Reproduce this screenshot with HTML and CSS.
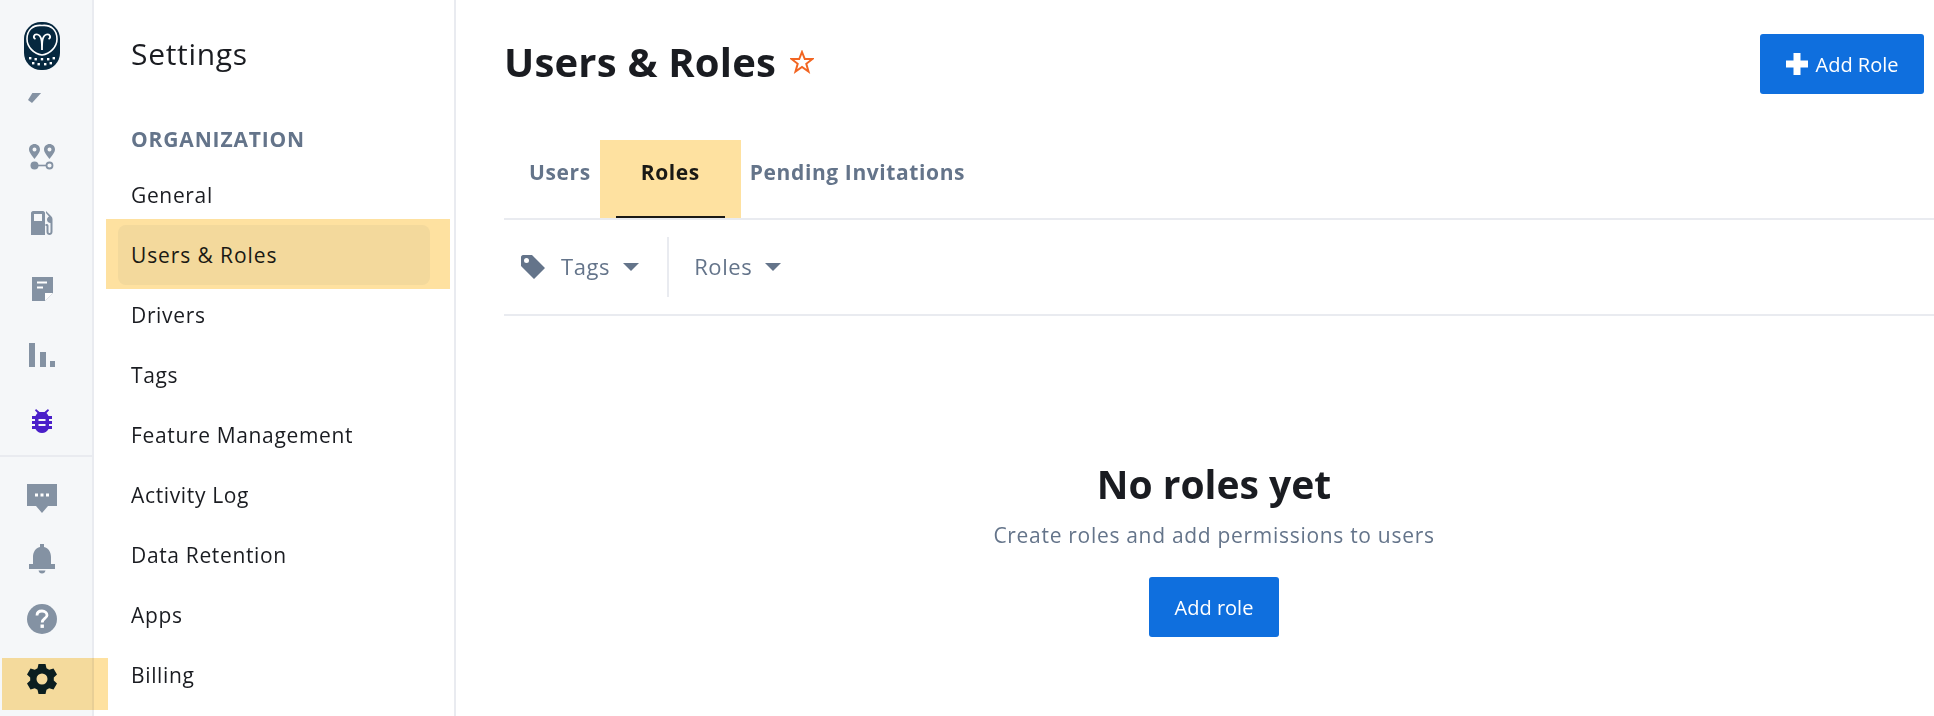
FILE: index.html
```html
<!DOCTYPE html>
<html lang="en">
<head>
    <meta charset="UTF-8">
    <meta name="viewport" content="width=device-width, initial-scale=1.0">
    <title>Users &amp; Roles</title>
    <link rel="stylesheet" href="styles.css">
</head>
<body>
    <!-- Icon rail -->
    <div class="rail">
        <div class="rail-logo">
            <svg width="36" height="48" viewBox="0 0 36 48">
                <rect width="36" height="48" rx="17" fill="#06283f"/>
                <path d="M18 3.500C27 2.500 33 8 33 17C33 25 26 32 18 33C10 32 3 25 3 17C3 8 9 2.500 18 3.500Z" fill="none" stroke="#fff" stroke-width="1.600"/>
                <path d="M18 28C18 20 18 14 13.500 12.500C10 11.500 8.500 15.500 11.500 17M18 28C18 20 18 14 22.500 12.500C26 11.500 27.500 15.500 24.500 17" fill="none" stroke="#fff" stroke-width="1.800"/>
                <g fill="#fff">
                    <rect x="5" y="35" width="2.400" height="2.400"/><rect x="10.500" y="36" width="2.400" height="2.400"/><rect x="16.800" y="36" width="2.400" height="2.400"/><rect x="23" y="36" width="2.400" height="2.400"/><rect x="28.600" y="35" width="2.400" height="2.400"/>
                    <rect x="8" y="40" width="2.400" height="2.400"/><rect x="13.500" y="41" width="2.400" height="2.400"/><rect x="20" y="41" width="2.400" height="2.400"/><rect x="25.600" y="40" width="2.400" height="2.400"/>
                </g>
            </svg>
        </div>
        <div class="rail-list">
            <div class="rail-item rail-cut">
                <svg width="26" height="26" viewBox="0 0 26 26"><path d="M4 14H13L3 25L-1 22Z" fill="#8492a3"/></svg>
            </div>
            <div class="rail-item">
                <svg width="26" height="26" viewBox="0 0 26 26" fill="#8492a3">
                    <path fill-rule="evenodd" d="M5.500 0C8.500 0 11 2.400 11 5.300C11 8.500 8 11.500 5.500 15C3 11.500 0 8.500 0 5.300C0 2.400 2.500 0 5.500 0ZM5.500 3.500A2 2 0 1 0 5.500 7.500A2 2 0 1 0 5.500 3.500Z"/>
                    <path fill-rule="evenodd" d="M20.500 0C23.500 0 26 2.400 26 5.300C26 8.500 23 11.500 20.500 15C18 11.500 15 8.500 15 5.300C15 2.400 17.500 0 20.500 0ZM20.500 3.500A2 2 0 1 0 20.500 7.500A2 2 0 1 0 20.500 3.500Z"/>
                    <circle cx="5.500" cy="21.500" r="4"/>
                    <rect x="8" y="20.700" width="10" height="1.600"/>
                    <circle cx="20.500" cy="21.500" r="3" fill="none" stroke="#8492a3" stroke-width="1.800"/>
                </svg>
            </div>
            <div class="rail-item">
                <svg width="22" height="24" viewBox="0 0 22 24" fill="#8492a3">
                    <path fill-rule="evenodd" d="M2 0H12C13 0 14 1 14 2V24H0V2C0 1 1 0 2 0ZM3 3V10H11V3Z"/>
                    <path d="M15 0L20 5C21 6 21.500 7 21.500 8V21C21.500 23 20 24 18.500 24C17 24 15.500 23 15.500 21V15H14.500V13H16C17 13 17.500 14 17.500 15V21C17.500 22.300 19.500 22.300 19.500 21V12C17.500 12 16 10.500 16 8.500C16 7 17 6 18 5.500L15 2Z"/>
                </svg>
            </div>
            <div class="rail-item">
                <svg width="21" height="24" viewBox="0 0 21 24">
                    <path d="M0 0H21V16L13 24H0Z" fill="#8492a3"/>
                    <path d="M5 4.500H15V6.500H5ZM5 9.500H11V11.500H5Z" fill="#fff"/>
                    <path d="M13 24V16H21Z" fill="#fff"/>
                </svg>
            </div>
            <div class="rail-item">
                <svg width="26" height="24" viewBox="0 0 26 24" fill="#8492a3">
                    <rect x="0" y="0" width="6" height="24"/>
                    <rect x="11" y="9" width="6" height="15"/>
                    <rect x="21" y="18" width="5" height="6"/>
                </svg>
            </div>
            <div class="rail-item">
                <svg width="20" height="24" viewBox="0 0 20 24" fill="#4a1fc9">
                    <path d="M4 0L7.500 3H12.500L16 0L17 1.500L14.500 4C15.500 5 16 6 16.500 7H20V10H17V12H20V15H17V17H20V20H16.500C15 22.500 13 24 10 24C7 24 5 22.500 3.500 20H0V17H3V15H0V12H3V10H0V7H3.500C4 6 4.500 5 5.500 4L3 1.500Z"/>
                    <path d="M6.500 10H13.500V12H6.500ZM6.500 15H13.500V17H6.500Z" fill="#f5f7f9"/>
                </svg>
            </div>
        </div>
        <div class="rail-bottom">
            <div class="rail-foot">
                <svg width="30" height="30" viewBox="0 0 30 30">
                    <path d="M0 0H30V22H21L15 29L9 22H0Z" fill="#8492a3"/>
                    <path d="M8 9.500H11V12.500H8ZM13.500 9.500H16.500V12.500H13.500ZM19 9.500H22V12.500H19Z" fill="#fff"/>
                </svg>
            </div>
            <div class="rail-foot">
                <svg width="26" height="30" viewBox="0 0 26 30" fill="#8492a3">
                    <path d="M11 0H15V3C19.500 4 22 8 22 13V20L26 20V25H0V20L4 20V13C4 8 6.500 4 11 3Z"/>
                    <path d="M9.500 26.500H16.500C16 28.500 15 29.500 13 29.500C11 29.500 10 28.500 9.500 26.500Z"/>
                </svg>
            </div>
            <div class="rail-foot">
                <svg width="30" height="30" viewBox="0 0 30 30">
                    <circle cx="15" cy="15" r="15" fill="#8492a3"/>
                    <path d="M10 11.500C10 8.500 12.200 7 15 7C18 7 20 8.800 20 11.200C20 14.500 15.200 14.500 15.200 18.500" fill="none" stroke="#fff" stroke-width="2.800"/>
                    <rect x="13.500" y="20.500" width="3.400" height="3.400" fill="#fff"/>
                </svg>
            </div>
            <div class="rail-foot">
                <svg width="30" height="30" viewBox="0 0 30 30">
                    <path fill="#0b2233" fill-rule="evenodd" d="M11.500 0H18.500L19.500 4.300L22.200 5.800L26.500 4.500L30 10.500L26.800 13.500V16.500L30 19.500L26.500 25.500L22.200 24.200L19.500 25.700L18.500 30H11.500L10.500 25.700L7.800 24.200L3.500 25.500L0 19.500L3.200 16.500V13.500L0 10.500L3.500 4.500L7.800 5.800L10.500 4.300ZM15 9.500A5.500 5.500 0 1 0 15 20.500A5.500 5.500 0 1 0 15 9.500Z"/>
                </svg>
            </div>
            <span class="mark mark-gear"></span>
        </div>
    </div>

    <!-- Settings menu -->
    <div class="menu">
        <div class="menu-title">Settings</div>
        <div class="menu-heading">ORGANIZATION</div>
        <a class="menu-item">General</a>
        <a class="menu-item active">Users &amp; Roles<span class="mark mark-menu"></span></a>
        <a class="menu-item">Drivers</a>
        <a class="menu-item">Tags</a>
        <a class="menu-item">Feature Management</a>
        <a class="menu-item">Activity Log</a>
        <a class="menu-item">Data Retention</a>
        <a class="menu-item">Apps</a>
        <a class="menu-item">Billing</a>
    </div>

    <!-- Main content -->
    <div class="main">
        <div class="page-head">
            <div class="page-title">
                <h1>Users &amp; Roles</h1>
                <svg width="24" height="24" viewBox="0 0 24 24"><path d="M12 2L14.800 9H22.500L16.300 13.800L18.500 21.500L12 17L5.500 21.500L7.700 13.800L1.500 9H9.200Z" fill="none" stroke="#f26522" stroke-width="2"/></svg>
            </div>
            <button class="btn btn-head">
                <svg width="22" height="22" viewBox="0 0 22 22"><path d="M7.500 0H14.500V7.500H22V14.500H14.500V22H7.500V14.500H0V7.500H7.500Z" fill="#fff"/></svg>
                Add Role
            </button>
        </div>

        <div class="tabs">
            <a class="tab">Users</a>
            <a class="tab active">Roles<span class="mark mark-tab"></span></a>
            <a class="tab">Pending Invitations</a>
        </div>

        <div class="filters">
            <div class="filter filter-tags">
                <svg width="24" height="24" viewBox="0 0 24 24"><path fill="#64748a" fill-rule="evenodd" d="M2 0H11L24 13L13 24L0 11V2C0 1 1 0 2 0ZM5.500 3A2.500 2.500 0 1 0 5.500 8A2.500 2.500 0 1 0 5.500 3Z"/></svg>
                <span>Tags</span>
                <i class="caret"></i>
            </div>
            <div class="filter filter-roles">
                <span>Roles</span>
                <i class="caret"></i>
            </div>
        </div>

        <div class="empty">
            <h2>No roles yet</h2>
            <p>Create roles and add permissions to users</p>
            <button class="btn btn-empty">Add role</button>
        </div>
    </div>
</body>
</html>
```

FILE: styles.css
```css
* {
    margin: 0;
    padding: 0;
    box-sizing: border-box;
    font-family: 'Open Sans', sans-serif;
}

body {
    height: 716px;
    overflow: hidden;
    display: flex;
    background: #fff;
    color: #1a1c21;
}

/* yellow annotation marks laid over the page */
.mark {
    position: absolute;
    background: #fee1a0;
    mix-blend-mode: multiply;
    pointer-events: none;
}

.rail {
    width: 94px;
    flex: none;
    position: relative;
    display: flex;
    flex-direction: column;
    background: #f5f7f9;
    border-right: 2px solid #e9ebf0;
    padding-right: 8px;
}

.rail-logo {
    height: 93px;
    flex: none;
    display: flex;
    justify-content: center;
    padding-top: 22px;
}

.rail-list {
    height: 362px;
    flex: none;
    overflow: hidden;
    margin-right: -8px;
    padding-right: 8px;
}

.rail-item {
    height: 66px;
    display: flex;
    align-items: center;
    justify-content: center;
}

.rail-cut {
    margin-top: -35px;
}

.rail-cut svg {
    overflow: visible;
}

.rail-bottom {
    flex: 1;
    margin-right: -8px;
    padding-right: 8px;
    padding-top: 12px;
    border-top: 2px solid #e9ebf0;
}

.rail-foot {
    height: 60px;
    display: flex;
    align-items: center;
    justify-content: center;
}

.mark-gear {
    left: 2px;
    right: -16px;
    top: 658px;
    height: 52px;
}

.menu {
    width: 362px;
    flex: none;
    padding: 0 24px;
    border-right: 2px solid #e9ebf0;
}

.menu-title {
    font-size: 30px;
    line-height: 38px;
    padding: 35px 0 0 13px;
    letter-spacing: 0.7px;
}

.menu-heading {
    font-size: 21px;
    line-height: 28px;
    font-weight: 700;
    color: #64748a;
    padding: 52px 0 12px 13px;
    letter-spacing: 0.85px;
}

.menu-item {
    display: block;
    position: relative;
    height: 60px;
    line-height: 60px;
    padding-left: 13px;
    font-size: 21px;
    letter-spacing: 0.65px;
    border-radius: 8px;
}

.menu-item.active {
    background: #f4f6f9;
    font-weight: 500;
    letter-spacing: 0.9px;
}

.mark-menu {
    left: -12px;
    right: -20px;
    top: -6px;
    bottom: -4px;
}

.main {
    flex: 1;
    min-width: 0;
    padding: 34px 10px 0 48px;
}

.page-head {
    display: flex;
    justify-content: space-between;
    height: 60px;
}

.page-title {
    display: flex;
    align-items: center;
    gap: 14px;
    height: 55px;
}

.page-title h1 {
    font-size: 40px;
    font-weight: 700;
    letter-spacing: 0.2px;
}

.btn {
    display: flex;
    align-items: center;
    justify-content: center;
    border: none;
    border-radius: 3px;
    background: #0f6fde;
    color: #fff;
    font-size: 20px;
}

.btn-head {
    width: 164px;
    height: 60px;
    gap: 8px;
}

.tabs {
    display: flex;
    height: 80px;
    margin-top: 46px;
    margin-right: -10px;
    border-bottom: 2px solid #e9ebf0;
}

.tab {
    position: relative;
    height: 78px;
    line-height: 65px;
    padding: 0 25px;
    font-size: 21px;
    font-weight: 700;
    letter-spacing: 0.6px;
    color: #64748a;
}

.tab.active {
    color: #1a1c21;
    border-bottom: 2px solid #1a1c21;
}

.mark-tab {
    left: -16px;
    right: -16px;
    top: 0;
    bottom: -2px;
}

.filters {
    display: flex;
    align-items: center;
    height: 96px;
    margin-right: -10px;
    border-bottom: 2px solid #e9ebf0;
    color: #64748a;
    font-size: 22px;
    letter-spacing: 0.6px;
}

.filter {
    display: flex;
    align-items: center;
    height: 60px;
}

.filter span {
    position: relative;
    top: -1px;
}

.filter-tags {
    padding: 0 28px 0 17px;
    gap: 13px;
    border-right: 2px solid #e9ebf0;
}

.filter-tags svg {
    margin-right: 3px;
}

.filter-roles {
    padding-left: 25px;
    gap: 13px;
}

.caret {
    display: block;
    width: 0;
    height: 0;
    border-left: 8px solid transparent;
    border-right: 8px solid transparent;
    border-top: 8px solid #64748a;
}

.empty {
    display: flex;
    flex-direction: column;
    align-items: center;
    padding-top: 142px;
}

.empty h2 {
    font-size: 39px;
    line-height: 52px;
    font-weight: 700;
}

.empty p {
    font-size: 21px;
    line-height: 28px;
    margin-top: 11px;
    color: #64748a;
    letter-spacing: 0.7px;
}

.btn-empty {
    width: 130px;
    height: 60px;
    margin-top: 28px;
}
```
